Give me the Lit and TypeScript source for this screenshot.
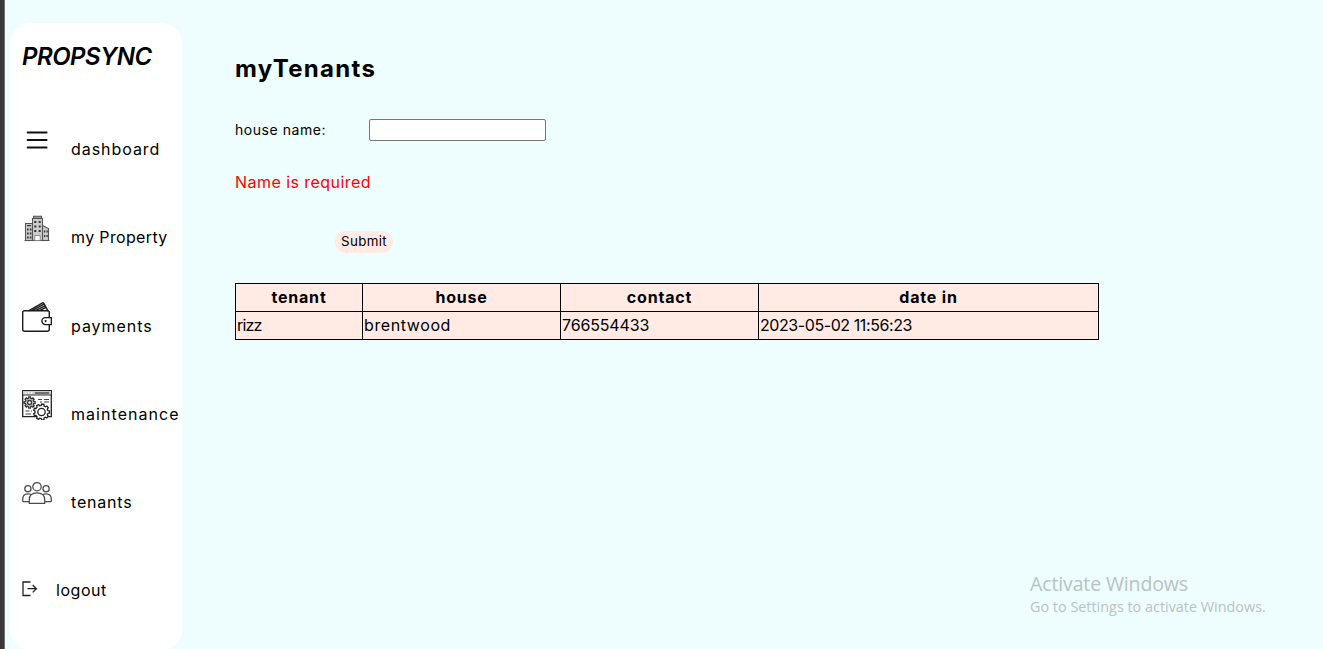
import { LitElement, html, css, svg } from "lit";
import { customElement } from "lit/decorators.js";

const gear = (cx: number, cy: number, r: number, teeth: number, depth: number) => {
  const pts: string[] = [];
  for (let i = 0; i < teeth; i++) {
    const a = (i * 2 * Math.PI) / teeth;
    const s = (2 * Math.PI) / teeth;
    for (const [o, q] of [[-0.32, r - depth], [-0.2, r], [0.2, r], [0.32, r - depth]]) {
      pts.push(`${(cx + q * Math.cos(a + o * s)).toFixed(2)},${(cy + q * Math.sin(a + o * s)).toFixed(2)}`);
    }
  }
  return pts.join(" ");
};

const icons = {
  menu: svg`<g stroke="#111" stroke-width="1.9" stroke-linecap="round"><path d="M5.6 7.5h19M5.6 15h19M5.6 22.5h19"/></g>`,
  building: svg`<g fill="#ccc" stroke="#555" stroke-width="1.100">
    <path d="M3.5 27.5v-17h7v17zM20.500 27.500v-15l6 3v12z"/>
    <path d="M10.500 27.500v-22h10v22z"/><path d="M11.500 5.500v-2.200h8v2.200z" fill="#999"/>
    <path d="M2.500 27.500h25"/></g>
    <g fill="#333"><path d="M12.300 8h2v2h-2zM16.700 8h2v2h-2zM12.300 12.500h2v2h-2zM16.700 12.500h2v2h-2zM12.300 17h2v2h-2zM16.700 17h2v2h-2zM5 12h4v1.200H5zM5 15.500h1.600v2H5zM7.800 15.500h1.600v2H7.800zM5 19.500h1.600v2H5zM7.800 19.500h1.600v2H7.800zM5 23.500h1.600v2H5zM7.800 23.500h1.600v2H7.800zM22 17.500h1.300v2H22zM24.500 17.500h1.300v2h-1.300zM22 22h1.300v2H22zM24.500 22h1.300v2h-1.300z"/></g>
    <path d="M12.800 27.500v-5h5.400v5z" fill="#fff" stroke="#777" stroke-width=".8"/>`,
  wallet: svg`<g fill="none" stroke="#1c1c1c" stroke-width="1.400" stroke-linejoin="round" stroke-linecap="round">
    <path d="M27.300 15.500v-4.700q0-2-2-2H2.700q-2 0-2 2v16.500q0 2 2 2h22.600q2 0 2-2v-4.800"/>
    <path d="M29.400 15.600h-6a3.500 3.500 0 0 0 0 7h6z"/>
    <path d="M7 8.600 20.500.9q.8-.4 1.300.4l4 7.300M10.500 8.300 22 2.200M14 8.300l9-4.500M18 8.300l6-3"/></g>
    <circle cx="23.600" cy="19.100" r="1.100" fill="#222"/>`,
  maintenance: svg`<path d="M.7.7h28.600v26H.7z" fill="#fff" stroke="#222" stroke-width="1.300"/>
    <path d="M1 1h28v3.700H1z" fill="#ccc"/><path d="M1 5h28" stroke="#333"/>
    <path d="M13 3h14" stroke="#666" stroke-width="1.800"/><path d="M2.800 3h1.500M6 3h1.500M9 3h1.500" stroke="#fff" stroke-width="1.500"/>
    <path d="M16 9.500h4M22 9.500h5M18 12h2M22 12h5M3.500 21h4M3.500 24h5.500M9 21h1" stroke="#444" stroke-width="1.200"/>
    <g stroke="#333" stroke-width="1.300" fill="#ccc"><polygon points=${gear(7.6, 12.5, 5.6, 8, 1.3)}/><circle cx="7.600" cy="12.500" r="2" fill="#fff"/></g>
    <g stroke="#222" stroke-width="1.300" fill="#fff"><polygon points=${gear(19.5, 22, 8, 9, 1.5)}/><circle cx="19.500" cy="22" r="3.700"/></g>`,
  people: svg`<g fill="#fff" stroke="#4a4a4a" stroke-width="1.250">
    <circle cx="5.900" cy="10.800" r="3.100"/><circle cx="24.100" cy="10.800" r="3.100"/>
    <path d="M.7 23.700v-2.500q0-5.400 5.200-5.400 3 0 4 1.500M29.300 23.700v-2.500q0-5.400-5.200-5.400-3 0-4 1.500M.7 23.700h6.500M29.300 23.700h-6.500"/>
    <circle cx="15" cy="8.700" r="4.200"/>
    <path d="M7.300 25.300v-3.500q0-7 7.700-7t7.700 7v3.500z"/></g>`,
  logout: svg`<g fill="none" stroke="#222" stroke-width="1.300"><path d="M8.500 1H1v13.500h7.500"/><path d="M5.500 7.700h8.800M10.700 4l3.700 3.700-3.700 3.700"/></g>`,
};

@customElement("app-root")
export class AppRoot extends LitElement {
  static styles = css`
    :host { display: flex; height: 649px; overflow: hidden; position: relative; background: #eefdfd;
      font-family: Inter, "Open Sans", sans-serif; font-size: 16px; color: #000; }
    * { box-sizing: border-box; }
    .edge { width: 5px; flex: none; background: #39393c; border-right: 1px solid #707276; }
    .side { width: 172px; flex: none; margin: 23px 0 0 5px; height: 627px; background: #fff; border-radius: 20px; padding: 16px 0 0 12px; }
    .brand { margin: 0; font-size: 24px; line-height: 36px; font-weight: 600; font-style: italic; letter-spacing: -0.5px; white-space: nowrap; }
    nav { padding-top: 50px; }
    .item { height: 88.25px; display: flex; align-items: flex-start; gap: 19px; white-space: nowrap; line-height: 24px; }
    .item span { padding-top: 12px; }
    .item svg { width: 30px; height: 30px; flex: none; }
    .item.out { gap: 18px; letter-spacing: 0.55px; }
    .item.out svg { width: 16px; height: 16px; margin-top: 15px; }
    .dashboard { letter-spacing: 0.95px; }
    .property { letter-spacing: 0.35px; }
    .payments { letter-spacing: 0.95px; }
    .maintenance { letter-spacing: 1.05px; }
    .tenants { letter-spacing: 0.8px; }
    main { margin-left: 53px; width: 864px; padding-top: 51px; }
    h1 { margin: 0; font-size: 24px; line-height: 36px; font-weight: 700; letter-spacing: 1.3px; }
    .field { display: flex; align-items: center; height: 22px; margin-top: 32px; }
    label { width: 134px; padding-bottom: 2px; font-size: 14px; letter-spacing: 0.55px; }
    input { width: 177px; height: 22px; margin: 0; padding: 1px 2px; background: #fff; border: 1px solid #767676; border-radius: 2px; }
    .error { margin: 29px 0 0; line-height: 24px; color: #f00; letter-spacing: 0.45px; }
    button { display: block; margin: 37px 0 0 100px; width: 58px; height: 22px; padding: 0 0 1px; border: 0; border-radius: 11px; background: #ffebe4; font: 13.333px/21px Inter, sans-serif; letter-spacing: 0.35px; color: #000; }
    table { margin-top: 30px; width: 864px; table-layout: fixed; border-collapse: collapse; background: #ffebe4; }
    th, td { height: 28px; border: 1px solid #000; padding: 0 1px 2px; line-height: 24px; white-space: nowrap; }
    th { font-weight: 700; letter-spacing: 0.8px; }
    td { text-align: left; }
    .name { letter-spacing: -0.8px; }
    .house { letter-spacing: 0.6px; }
    .phone { letter-spacing: -0.15px; }
    .date { letter-spacing: -0.42px; }
    .c1 { width: 127px; } .c2 { width: 198px; } .c3 { width: 198px; }
    .notice { position: absolute; left: 1030px; top: 571px; font-family: "Open Sans", sans-serif; color: #b9c3c3; white-space: nowrap; }
    .big { font-size: 19.5px; line-height: 26px; letter-spacing: -0.13px; }
    .small { font-size: 14.4px; line-height: 20px; }
  `;

  item(icon: unknown, label: string, cls: string) {
    return html`<div class="item ${cls}"><svg viewBox="0 0 30 30">${icon}</svg><span>${label}</span></div>`;
  }

  render() {
    return html`
      <div class="edge"></div>
      <aside class="side">
        <h2 class="brand">PROPSYNC</h2>
        <nav>
          ${this.item(icons.menu, "dashboard", "dashboard")}
          ${this.item(icons.building, "my Property", "property")}
          ${this.item(icons.wallet, "payments", "payments")}
          ${this.item(icons.maintenance, "maintenance", "maintenance")}
          ${this.item(icons.people, "tenants", "tenants")}
          <div class="item out"><svg viewBox="0 0 16 16">${icons.logout}</svg><span>logout</span></div>
        </nav>
      </aside>
      <main>
        <h1>myTenants</h1>
        <div class="field"><label for="house">house name:</label><input id="house" type="text" /></div>
        <p class="error">Name is required</p>
        <button type="button">Submit</button>
        <table>
          <colgroup><col class="c1" /><col class="c2" /><col class="c3" /><col /></colgroup>
          <thead><tr><th>tenant</th><th>house</th><th>contact</th><th>date in</th></tr></thead>
          <tbody><tr><td class="name">rizz</td><td class="house">brentwood</td><td class="phone">766554433</td><td class="date">2023-05-02 11:56:23</td></tr></tbody>
        </table>
      </main>
      <div class="notice"><div class="big">Activate Windows</div><div class="small">Go to Settings to activate Windows.</div></div>
    `;
  }
}
